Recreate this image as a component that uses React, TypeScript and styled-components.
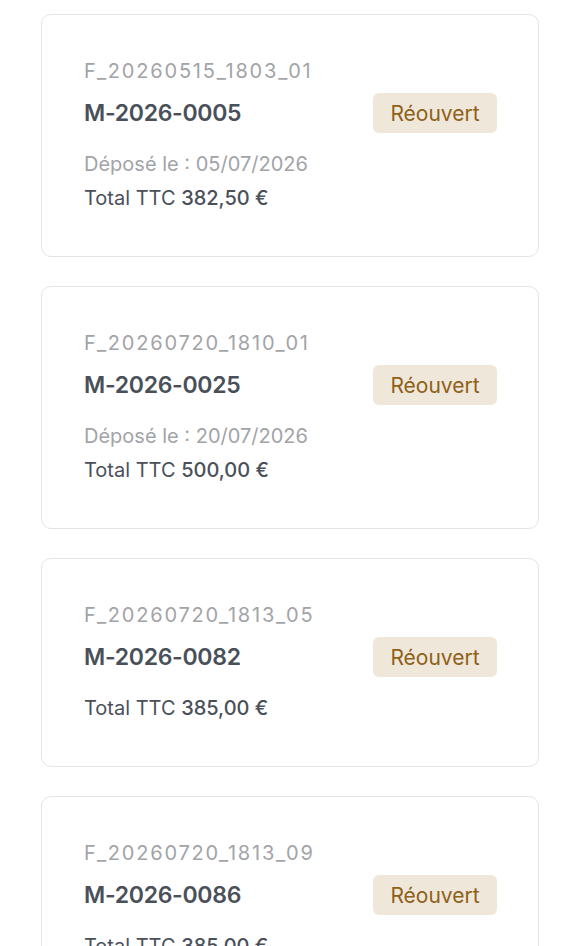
import React from "react";
import styled, { createGlobalStyle } from "styled-components";

type Claim = {
  file: string;
  ref: string;
  status: string;
  deposit?: string;
  total: string;
};

const claims: Claim[] = [
  { file: "F_20260515_1803_01", ref: "M-2026-0005", status: "Réouvert", deposit: "05/07/2026", total: "382,50 €" },
  { file: "F_20260720_1810_01", ref: "M-2026-0025", status: "Réouvert", deposit: "20/07/2026", total: "500,00 €" },
  { file: "F_20260720_1813_05", ref: "M-2026-0082", status: "Réouvert", total: "385,00 €" },
  { file: "F_20260720_1813_09", ref: "M-2026-0086", status: "Réouvert", total: "385,00 €" },
];

const Global = createGlobalStyle`
  body {
    margin: 0;
    background: #ffffff;
    font-family: Inter, "Liberation Sans", sans-serif;
    -webkit-font-smoothing: antialiased;
  }
`;

const List = styled.main`
  display: flex;
  flex-direction: column;
  gap: 29px;
  padding: 14px 41px;
  height: 946px;
  overflow: hidden;
  box-sizing: border-box;
`;

const Card = styled.article`
  flex-shrink: 0;
  border: 1px solid #e3e4e6;
  border-radius: 10px;
  padding: 42px 41px 43px 42px;
  display: flex;
  flex-direction: column;
  background: #fff;
`;

const FileName = styled.div`
  font-size: 20px;
  line-height: 28px;
  color: #a2a4a8;
  letter-spacing: 1.8px;
`;

const TitleRow = styled.div`
  display: flex;
  align-items: center;
  justify-content: space-between;
  margin-top: 8px;
  height: 40px;
`;

const Ref = styled.h2`
  margin: 0;
  font-size: 23px;
  font-weight: 600;
  letter-spacing: -0.3px;
  color: #4a5059;
`;

const Badge = styled.span`
  display: inline-flex;
  align-items: center;
  justify-content: center;
  width: 124px;
  height: 40px;
  border-radius: 6px;
  background: #efe7d9;
  color: #8e6018;
  font-size: 21px;
`;

const Meta = styled.div<{ $muted?: boolean; $first?: boolean }>`
  font-size: 20px;
  line-height: 30px;
  color: ${(p) => (p.$muted ? "#a2a4a8" : "#4a5059")};
  margin-top: ${(p) => (p.$first ? "16px" : "4px")};

  b {
    font-weight: 500;
  }
`;

export default function App() {
  return (
    <>
      <Global />
      <List>
        {claims.map((c) => (
          <Card key={c.file}>
            <FileName>{c.file}</FileName>
            <TitleRow>
              <Ref>{c.ref}</Ref>
              <Badge>{c.status}</Badge>
            </TitleRow>
            {c.deposit && (
              <Meta $muted $first>
                Déposé le : {c.deposit}
              </Meta>
            )}
            <Meta $first={!c.deposit}>
              Total TTC <b>{c.total}</b>
            </Meta>
          </Card>
        ))}
      </List>
    </>
  );
}
